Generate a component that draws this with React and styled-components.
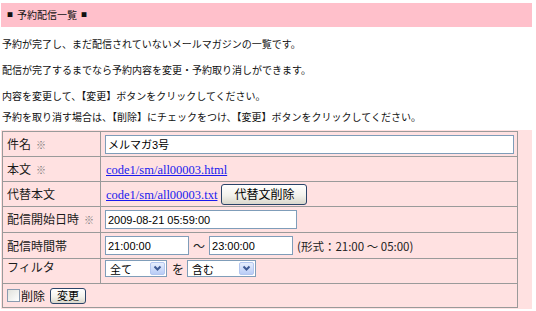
import React from 'react';
import styled, { createGlobalStyle } from 'styled-components';

const GlobalStyle = createGlobalStyle`
  html, body { margin: 0; padding: 0; background: #ffffff; }
  body { font-family: "Noto Sans CJK JP", "Liberation Sans", sans-serif; color: #111; }
`;

const Page = styled.div`
  width: 536px;
  height: 311px;
  overflow: hidden;
  padding-top: 3px;
  box-sizing: border-box;
`;

const TitleBar = styled.h1`
  margin: 0 0 0 1px;
  width: 531px;
  height: 24px;
  background: #ffc0cb;
  display: flex;
  align-items: center;
  gap: 4px;
  padding-left: 6px;
  box-sizing: border-box;
  font-size: 10px;
  font-weight: normal;
  line-height: 1;
  color: #111;
`;

const Square = styled.span`
  font-size: 6px;
`;

const Note = styled.p`
  margin: ${(p) => p.$top}px 0 0 2px;
  font-size: 10px;
  line-height: 14px;
  height: 14px;
  white-space: nowrap;
  color: #111;
`;

const Panel = styled.div`
  margin: 6px 0 0 1px;
  width: 531px;
  background: #ffe1e1;
  padding: 1px 0 1px 1px;
  box-sizing: border-box;
`;

const Form = styled.table`
  width: 516px;
  table-layout: fixed;
  border-collapse: separate;
  border-spacing: 0;
  border-top: 1px solid #9a9a9a;
  border-left: 1px solid #9a9a9a;
`;

const Row = styled.tr`
  height: ${(p) => p.$h}px;
`;

const Label = styled.th`
  width: 93px;
  padding: 0 0 0 4px;
  border-right: 1px solid #9a9a9a;
  border-bottom: 1px solid #9a9a9a;
  text-align: left;
  font-weight: normal;
  font-size: 12px;
  line-height: 14px;
  color: #1a1a1a;
  white-space: nowrap;
  vertical-align: ${(p) => (p.$top ? 'top' : 'middle')};
  padding-top: ${(p) => (p.$top ? 1 : 0)}px;
`;

const Mark = styled.span`
  margin-left: 5px;
  font-size: 10px;
  color: #7a7a7a;
`;

const Value = styled.td`
  width: 412px;
  padding: 0 0 0 4px;
  border-right: 1px solid #9a9a9a;
  border-bottom: 1px solid #9a9a9a;
  font-size: 12px;
  color: #111;
  white-space: nowrap;
  vertical-align: ${(p) => (p.$top ? 'top' : 'middle')};
  padding-top: ${(p) => (p.$top ? 1 : 0)}px;
`;

const Line = styled.div`
  display: flex;
  align-items: ${(p) => p.$align || 'center'};
`;

const TextInput = styled.input`
  box-sizing: border-box;
  width: ${(p) => p.$w}px;
  height: 19px;
  margin: 0;
  padding: 0 2px;
  border: 1px solid #7f9db9;
  background: #fff;
  font-family: "Liberation Sans", "Noto Sans CJK JP", sans-serif;
  font-size: 11px;
  color: #000;
  outline: none;
`;

const FileLink = styled.a`
  font-family: "Liberation Serif", "Noto Sans CJK JP", serif;
  font-size: 12.5px;
  line-height: 15px;
  color: #1a1aee;
  text-decoration: underline;
  margin-left: 1px;
`;

const Button = styled.button`
  box-sizing: border-box;
  height: ${(p) => (p.$small ? 16 : 21)}px;
  padding: 0 ${(p) => (p.$small ? 6 : 12)}px;
  margin: 0 0 0 ${(p) => p.$gap || 0}px;
  border: 1px solid #2b4468;
  border-radius: 3px;
  background: linear-gradient(#ffffff, #f3f2ec 55%, #d9d7cc);
  font-family: "Noto Sans CJK JP", sans-serif;
  font-size: ${(p) => (p.$small ? 11 : 12)}px;
  line-height: 1;
  color: #000;
`;

const Sep = styled.span`
  margin: 0 ${(p) => p.$r || 4}px 0 ${(p) => p.$l || 4}px;
  font-size: ${(p) => p.$size || 12}px;
  color: #222;
`;

const Select = styled.div`
  box-sizing: border-box;
  width: ${(p) => p.$w}px;
  height: 17px;
  border: 1px solid #7f9db9;
  background: #fff;
  display: flex;
  align-items: center;
  justify-content: space-between;
  padding: 0 1px 0 4px;
  font-size: 11px;
  color: #000;
`;

const Arrow = styled.span`
  box-sizing: border-box;
  width: 15px;
  height: 13px;
  border: 1px solid #b3c6ef;
  border-radius: 2px;
  background: linear-gradient(#e6eefd, #b9ccf6);
  display: flex;
  align-items: center;
  justify-content: center;
`;

const Check = styled.input`
  appearance: none;
  -webkit-appearance: none;
  box-sizing: border-box;
  width: 13px;
  height: 13px;
  margin: 0 1px 0 0;
  border: 1px solid #8a9bb0;
  background: linear-gradient(135deg, #e2e2dc, #ffffff);
`;

const CheckText = styled.span`
  font-size: 12px;
  color: #111;
`;

function Chevron() {
  return (
    <svg width="9" height="7" viewBox="0 0 9 7">
      <path d="M1.5 1.5 L4.5 4.5 L7.5 1.5" fill="none" stroke="#3f5a94" strokeWidth="2" />
    </svg>
  );
}

function Dropdown({ w, children }) {
  return (
    <Select $w={w}>
      <span>{children}</span>
      <Arrow>
        <Chevron />
      </Arrow>
    </Select>
  );
}

export default function App() {
  return (
    <Page>
      <GlobalStyle />
      <TitleBar>
        <Square>■</Square>
        予約配信一覧
        <Square>■</Square>
      </TitleBar>
      <Note $top={10}>予約が完了し、まだ配信されていないメールマガジンの一覧です。</Note>
      <Note $top={12}>配信が完了するまでなら予約内容を変更・予約取り消しができます。</Note>
      <Note $top={12}>内容を変更して、【変更】ボタンをクリックしてください。</Note>
      <Note $top={7}>予約を取り消す場合は、【削除】にチェックをつけ、【変更】ボタンをクリックしてください。</Note>
      <Panel>
        <Form>
          <tbody>
            <Row $h={25}>
              <Label>件名<Mark>※</Mark></Label>
              <Value>
                <Line>
                  <TextInput $w={409} readOnly defaultValue="メルマガ3号" />
                </Line>
              </Value>
            </Row>
            <Row $h={25}>
              <Label>本文<Mark>※</Mark></Label>
              <Value>
                <FileLink href="#">code1/sm/all00003.html</FileLink>
              </Value>
            </Row>
            <Row $h={25}>
              <Label>代替本文</Label>
              <Value>
                <Line $align="baseline">
                  <FileLink href="#">code1/sm/all00003.txt</FileLink>
                  <Button $gap={4}>代替文削除</Button>
                </Line>
              </Value>
            </Row>
            <Row $h={26}>
              <Label>配信開始日時<Mark>※</Mark></Label>
              <Value>
                <Line>
                  <TextInput $w={192} readOnly defaultValue="2009-08-21 05:59:00" />
                </Line>
              </Value>
            </Row>
            <Row $h={26}>
              <Label>配信時間帯</Label>
              <Value>
                <Line>
                  <TextInput $w={84} readOnly defaultValue="21:00:00" />
                  <Sep $l={4} $r={4}>～</Sep>
                  <TextInput $w={84} readOnly defaultValue="23:00:00" />
                  <Sep $l={4} $r={0} $size={11.5}>(形式：21:00 ～ 05:00)</Sep>
                </Line>
              </Value>
            </Row>
            <Row $h={25}>
              <Label $top>フィルタ</Label>
              <Value $top>
                <Line>
                  <Dropdown w={62}>全て</Dropdown>
                  <Sep $l={5} $r={3}>を</Sep>
                  <Dropdown w={69}>含む</Dropdown>
                </Line>
              </Value>
            </Row>
            <Row $h={24}>
              <Value colSpan={2}>
                <Line>
                  <Check type="checkbox" />
                  <CheckText>削除</CheckText>
                  <Button $small $gap={5}>変更</Button>
                </Line>
              </Value>
            </Row>
          </tbody>
        </Form>
      </Panel>
    </Page>
  );
}
